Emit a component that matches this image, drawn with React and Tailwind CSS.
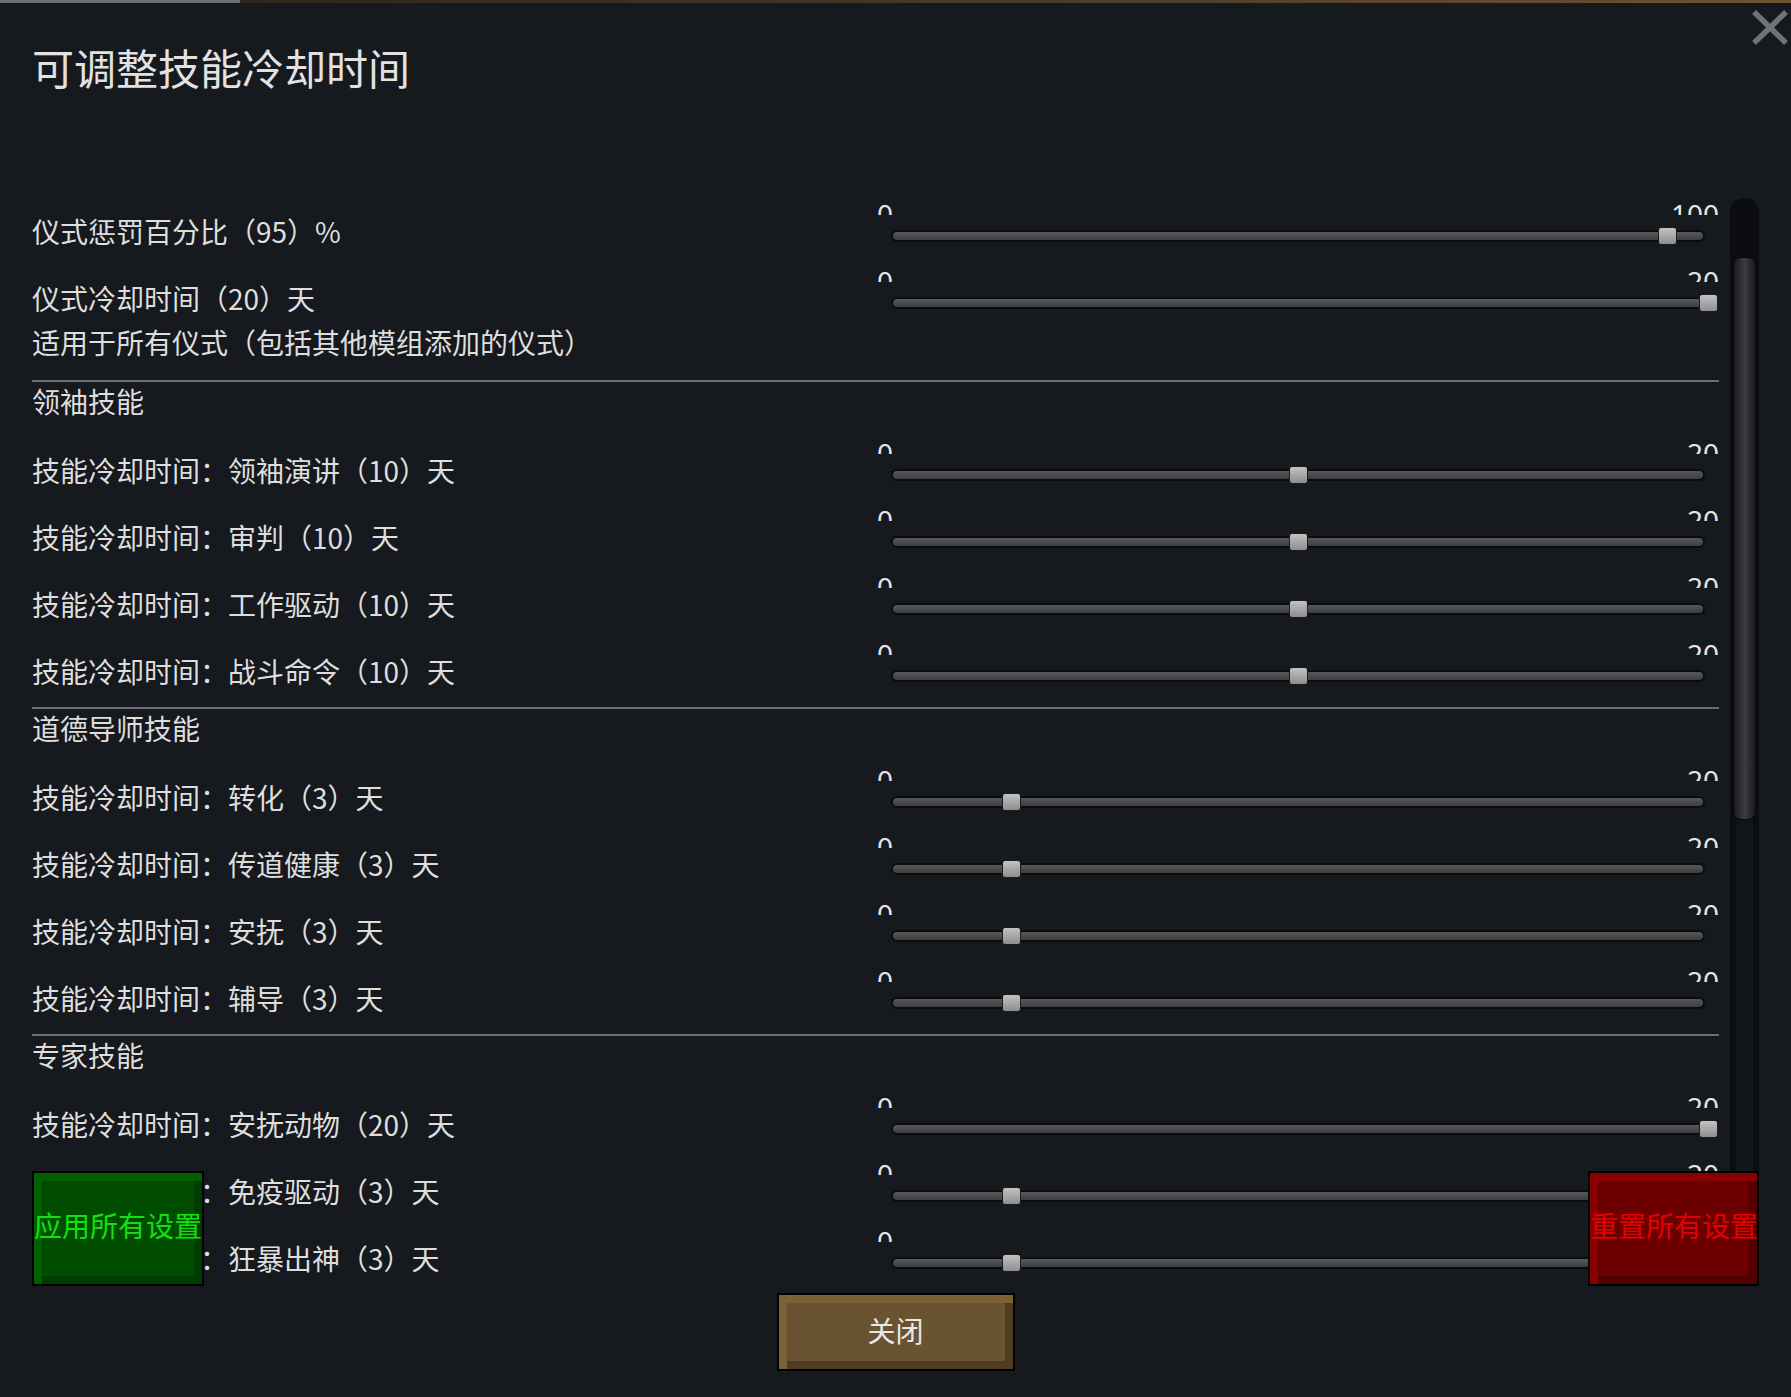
const sections = [
  {
    title: null,
    rows: [
      { label: ["仪式惩罚百分比（95）%"], value: 95, max: 100 },
      {
        label: ["仪式冷却时间（20）天", "适用于所有仪式（包括其他模组添加的仪式）"],
        value: 20,
        max: 20,
      },
    ],
  },
  {
    title: "领袖技能",
    rows: [
      { label: ["技能冷却时间：领袖演讲（10）天"], value: 10, max: 20 },
      { label: ["技能冷却时间：审判（10）天"], value: 10, max: 20 },
      { label: ["技能冷却时间：工作驱动（10）天"], value: 10, max: 20 },
      { label: ["技能冷却时间：战斗命令（10）天"], value: 10, max: 20 },
    ],
  },
  {
    title: "道德导师技能",
    rows: [
      { label: ["技能冷却时间：转化（3）天"], value: 3, max: 20 },
      { label: ["技能冷却时间：传道健康（3）天"], value: 3, max: 20 },
      { label: ["技能冷却时间：安抚（3）天"], value: 3, max: 20 },
      { label: ["技能冷却时间：辅导（3）天"], value: 3, max: 20 },
    ],
  },
  {
    title: "专家技能",
    rows: [
      { label: ["技能冷却时间：安抚动物（20）天"], value: 20, max: 20 },
      { label: ["技能冷却时间：免疫驱动（3）天"], value: 3, max: 20 },
      { label: ["技能冷却时间：狂暴出神（3）天"], value: 3, max: 20 },
    ],
  },
];

function Slider({ value, max }) {
  // thumb centre runs a little past both ends of the track
  const left = -12.5 + 820 * (value / max);

  return (
    <div className="w-[842px] pt-[3px]">
      <div className="flex justify-between h-[12px] overflow-hidden text-[28px] leading-none text-[#e4e4e4] font-['Noto_Sans',sans-serif]">
        <span className="-mt-[3px]">0</span>
        <span className="-mt-[3px]">{max}</span>
      </div>
      <div className="relative mt-[15px] mx-[14px] h-[12px] rounded-full bg-[#0b0c0e] p-[2px]">
        <div className="h-full rounded-full bg-linear-to-b from-[#585859] to-[#3d3e3f]" />
        <div
          className="absolute top-1/2 -translate-y-1/2 w-[19px] h-[18px] rounded-[3px] border border-[#1c1c1c] bg-linear-to-b from-[#c2c2c2] to-[#8e8e8e]"
          style={{ left }}
        />
      </div>
    </div>
  );
}

function SettingRow({ label, value, max }) {
  const tall = label.length > 1;

  return (
    <div className={tall ? "flex h-[113px]" : "flex h-[67px]"}>
      <div className="w-[845px] pt-[9px] leading-[44px]">
        {label.map((line) => (
          <div key={line}>{line}</div>
        ))}
      </div>
      <Slider value={value} max={max} />
    </div>
  );
}

export default function App() {
  return (
    <div className="relative w-full h-[1397px] overflow-hidden bg-[#16191d] text-[28px] text-[#dedede] font-['Noto_Sans_CJK_SC','Noto_Sans',sans-serif]">
      <div className="flex h-[3px]">
        <div className="w-[240px] bg-[#6b6f74]" />
        <div className="flex-1 bg-linear-to-r from-[#2e2620] via-[#4a3a28] to-[#6b5432]" />
      </div>

      <div className="h-[195px]">
        <div className="flex items-center h-[126px] pl-[32px] text-[42px] text-[#e2e2e2]">
          可调整技能冷却时间
        </div>
      </div>

      {/* window close */}
      <button className="absolute top-[9px] right-[2px] w-[38px] h-[37px]">
        <svg viewBox="0 0 38 37" className="w-full h-full">
          <path
            d="M3 3 L35 34 M35 3 L3 34"
            stroke="#6f7378"
            strokeWidth="5.5"
            fill="none"
          />
        </svg>
      </button>

      <div className="flex h-[1087px] overflow-hidden pl-[32px]">
        <div className="w-[1687px] pt-[2px]">
          {sections.map((section, idx) => (
            <div key={idx}>
              {section.title && (
                <div className="h-[59px] border-t-2 border-[#6b6e72] leading-[38px]">
                  {section.title}
                </div>
              )}
              {section.rows.map((row) => (
                <SettingRow key={row.label[0]} {...row} />
              ))}
            </div>
          ))}
        </div>

        <div className="ml-[11px] w-[29px] h-full flex flex-col rounded-t-[14px] bg-[#0b0d10] px-[3px] pt-[59px]">
          <div className="h-[563px] rounded-[8px] border border-[#07080a] bg-linear-to-r from-[#1a1b1d] via-[#3a3c3f] to-[#1a1b1d]" />
          <div className="flex-1 mx-[3px] bg-[#12151a]" />
        </div>
      </div>

      <button className="block mx-auto mt-[8px] w-[238px] h-[78px] pb-[4px] border-2 border-black bg-[#6a5330] shadow-[inset_8px_8px_0_#7c6136,inset_-8px_-8px_0_#4f3d22] text-[28px] text-[#e8e8e8]">
        关闭
      </button>

      <button className="absolute left-[32px] top-[1171px] w-[172px] h-[115px] pb-[8px] border-2 border-black bg-[#004d00] shadow-[inset_8px_8px_0_#006000,inset_-8px_-8px_0_#003b00] text-[28px] text-[#12e012] whitespace-nowrap">
        应用所有设置
      </button>

      <button className="absolute left-[1588px] top-[1171px] w-[171px] h-[115px] pb-[8px] border-2 border-black bg-[#6c0000] shadow-[inset_8px_8px_0_#880000,inset_-8px_-8px_0_#520000] text-[28px] text-[#e40000] whitespace-nowrap">
        重置所有设置
      </button>
    </div>
  );
}
